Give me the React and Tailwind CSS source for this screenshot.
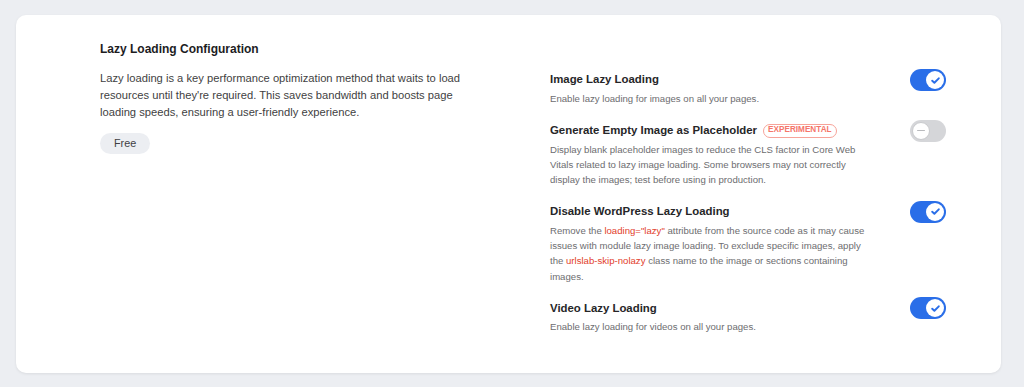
import React from "react";

const options = [
  {
    id: "image",
    title: "Image Lazy Loading",
    enabled: true,
    desc: <>Enable lazy loading for images on all your pages.</>,
  },
  {
    id: "placeholder",
    title: "Generate Empty Image as Placeholder",
    badge: "EXPERIMENTAL",
    enabled: false,
    desc: (
      <>
        Display blank placeholder images to reduce the CLS factor in Core Web
        Vitals related to lazy image loading. Some browsers may not correctly
        display the images; test before using in production.
      </>
    ),
  },
  {
    id: "wp",
    title: "Disable WordPress Lazy Loading",
    enabled: true,
    desc: (
      <>
        Remove the <span className="text-[#e2402c]">loading="lazy"</span>{" "}
        attribute from the source code as it may cause issues with module lazy
        image loading. To exclude specific images, apply the{" "}
        <span className="text-[#e2402c]">urlslab-skip-nolazy</span> class name
        to the image or sections containing images.
      </>
    ),
  },
  {
    id: "video",
    title: "Video Lazy Loading",
    enabled: true,
    desc: <>Enable lazy loading for videos on all your pages.</>,
  },
];

const Toggle = ({ on }) => {
  if (on) {
    return (
      <div className="w-[36px] h-[22px] rounded-full bg-[#2a6ee8] flex items-center justify-end px-[2px] shrink-0">
        <div className="w-[18px] h-[18px] rounded-full bg-white flex items-center justify-center">
          <svg width="11" height="11" viewBox="0 0 12 12" fill="none">
            <path
              d="M2.4 6.2l2.4 2.3 4.8-4.9"
              stroke="#2a6ee8"
              strokeWidth="2.1"
              strokeLinecap="round"
              strokeLinejoin="round"
            />
          </svg>
        </div>
      </div>
    );
  }
  return (
    <div className="w-[36px] h-[22px] rounded-full bg-[#d5d6d9] flex items-center justify-start px-[2px] shrink-0">
      <div className="w-[18px] h-[18px] rounded-full bg-white border-[1.5px] border-[#c9cacd] flex items-center justify-center">
        <div className="w-[8px] h-[1.5px] bg-[#b9babd] rounded-full" />
      </div>
    </div>
  );
};

export default function App() {
  return (
    <div
      className="min-h-screen bg-[#eceef2] pl-4 pr-[23px] pt-[15px] pb-[14px]"
      style={{ fontFamily: '"Liberation Sans", Arial, sans-serif' }}
    >
      <div className="bg-white rounded-[10px] shadow-[0_1px_3px_rgba(0,0,0,0.08)] pl-[84px] pr-[55px] pt-[26px] pb-[38px] grid grid-cols-[450px_1fr]">
        {/* left side */}
        <div className="pr-[80px]">
          <h2 className="text-[12px] leading-[16px] font-bold text-[#1d1d1f]">
            Lazy Loading Configuration
          </h2>
          <p className="mt-[12.5px] text-[11.2px] leading-[17px] text-[#3f3f42]">
            Lazy loading is a key performance optimization method that waits to
            load resources until they're required. This saves bandwidth and
            boosts page loading speeds, ensuring a user-friendly experience.
          </p>
          <span className="mt-[12.5px] inline-flex items-center h-[21px] px-[14px] rounded-full bg-[#eceef2] text-[10.8px] font-medium text-[#3f3f42]">
            Free
          </span>
        </div>

        {/* right side */}
        <div className="pt-[28px] flex flex-col gap-[13.2px]">
          {options.map((opt) => (
            <div key={opt.id}>
              <div className="flex items-center justify-between h-[22px]">
                <div className="flex items-center gap-[6px]">
                  <h3 className="text-[11.4px] font-bold text-[#262628]">
                    {opt.title}
                  </h3>
                  {opt.badge && (
                    <span className="inline-flex items-center h-[14px] px-[4px] rounded-full border border-[#f7a399] text-[8.2px] font-bold text-[#f5766a]">
                      {opt.badge}
                    </span>
                  )}
                </div>
                <Toggle on={opt.enabled} />
              </div>
              <p className="max-w-[320px] text-[9.6px] leading-[15.35px] text-[#6d6d70]">
                {opt.desc}
              </p>
            </div>
          ))}
        </div>
      </div>
    </div>
  );
}
